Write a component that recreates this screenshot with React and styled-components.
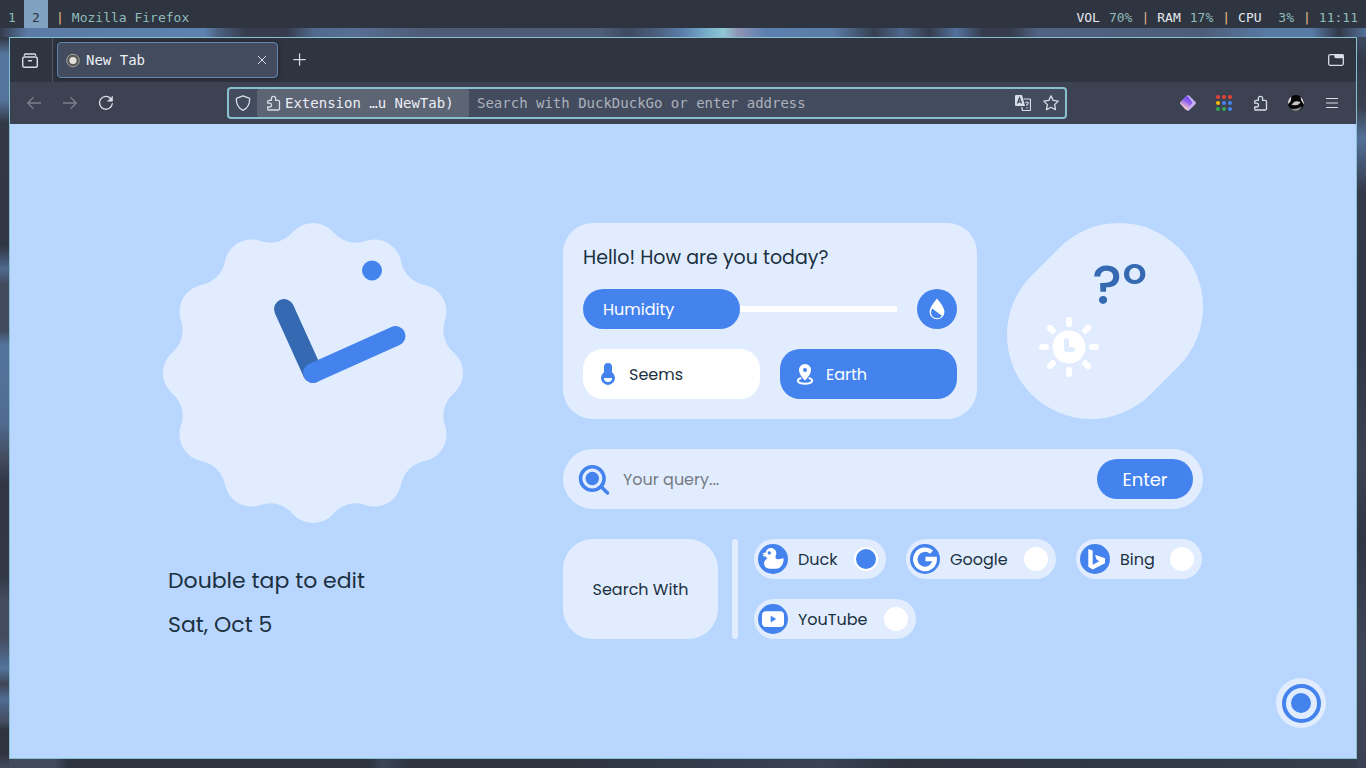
import React, { useState } from "react";
import styled, { createGlobalStyle, css } from "styled-components";

const color = {
  sky: "#b9d6ff",
  card: "#e1edff",
  blue: "#4483ed",
  deep: "#3569b2",
  ink: "#1c313f",
  panel: "#2e3440",
  toolbar: "#3c4252",
  field: "#434c5e",
  frost: "#88c0d0",
  snow: "#d8dee9",
};
const mono = `"DejaVu Sans Mono", monospace`;
const sans = `Poppins, Inter, "Open Sans", sans-serif`;

const GlobalStyle = createGlobalStyle`
  *, *::before, *::after { box-sizing: border-box; }
  body { margin: 0; background: ${color.panel}; }
  button, input { font: inherit; color: inherit; }
  button { border: 0; padding: 0; background: none; cursor: pointer; }
  p, h1 { margin: 0; font-weight: 400; }
  svg { display: block; flex: none; }
`;

const Desktop = styled.div`
  min-height: 100vh;
  display: flex;
  flex-direction: column;
  font-family: ${mono};
  background-color: #2f3542;
  background-repeat: no-repeat;
  background-image:
    linear-gradient(90deg, #343b4b 0, #5a7ba5 2%, #5d82af 15%, #4c6080 16%, #363c4d 18%, #363c4d 21%, #51698e 23%, #586f94 26%, #4e5b76 31%, #4d5c77 44%, #3f4a61 46%, #4a5d7c 48%, #5b7fac 50%, #7cb4cf 52%, #8fc7d4 53%, #8f95b4 54%, #5c80ae 56%, #5a7ca8 61%, #373f50 64%, #4e678c 66%, #353c4c 68%, #53719b 70%, #353b4b 72%, #353b4b 74%, #506384 76%, #4d5d79 88%, #587ba6 93%, #587ba6 96%, #323948 98%, #52709a 100%),
    linear-gradient(180deg, #333a49 0, #343b4a 5%, #55749d 7%, #55749d 13%, #323846 16%, #303644 32%, #50698e 35%, #424a5d 37%, #424a5d 43%, #54749e 45%, #506b91 55%, #42495b 60%, #303644 63%, #323846 75%, #444b5e 78%, #444b5e 83%, #54749e 87%, #3e4658 89%, #506b91 91%, #444d61 94%, #2d333f 95%, #2d333f 98%, #434a5d 100%),
    linear-gradient(180deg, #4b6285 0, #323948 8%, #3a4151 14%, #537199 18%, #343a49 25%, #303644 45%, #3b4353 60%, #303644 70%, #3e4659 85%, #3b4253 100%),
    linear-gradient(90deg, #434a5d 0, #434a5d 4%, #2d333f 5%, #2d333f 27%, #3b4558 28%, #2e3440 30%, #2e3440 42%, #3a4254 60%, #2e3440 66%, #363d4c 100%);
  background-size: 100% 37px, 9px 100%, 9px 100%, 100% 9px;
  background-position: 0 0, 0 0, 100% 0, 0 100%;
`;

const StatusBar = styled.header`
  height: 28px;
  padding-right: 8px;
  display: flex;
  justify-content: space-between;
  background: ${color.panel};
  font-size: 13px;
  line-height: 35px;
  color: #8fbcbb;
`;
const StatusGroup = styled.div`
  display: flex;
  gap: ${(p) => p.$gap || 0}px;
`;
const Workspace = styled.button`
  width: 24px;
  height: 28px;
  padding-top: 6px;
  line-height: 24px;
  ${(p) => p.$active && css`background: #81a1c1; color: ${color.panel};`}
`;
const Divider = styled.span`
  color: #e6ba88;
`;
const StatusLabel = styled.span`
  color: #e5e9f0;
`;
const WindowTitle = styled.span`
  padding-left: 8px;
  display: flex;
  gap: 8px;
`;

const Browser = styled.div`
  flex: 1;
  margin: 9px;
  display: flex;
  flex-direction: column;
  border: 1px solid ${color.frost};
  color: ${color.snow};
  font-size: 14px;
`;
const TabStrip = styled.div`
  height: 44px;
  display: flex;
  align-items: center;
  background: ${color.panel};
`;
const IconButton = styled.button`
  width: ${(p) => p.$width || 36}px;
  height: 36px;
  display: grid;
  place-items: center;
  opacity: ${(p) => (p.disabled ? 0.4 : 1)};
`;
const RecentSlot = styled.div`
  align-self: stretch;
  width: 43px;
  padding-right: 2px;
  display: grid;
  place-items: center;
  border-right: 1px solid #4f5665;
`;
const Tab = styled.div`
  width: 221px;
  height: 36px;
  margin: 0 4px;
  padding: 0 4px 0 8px;
  display: flex;
  align-items: center;
  gap: 5px;
  background: ${color.field};
  border: 1px solid #6286b3;
  border-radius: 4px;
  box-shadow: 0 0 4px rgba(0, 0, 0, 0.4);
  color: #eceff4;
`;
const TabTitle = styled.span`
  flex: 1;
`;
const TabStripEnd = styled.div`
  margin-left: auto;
  padding-right: 2px;
`;
const Toolbar = styled.div`
  height: 42px;
  padding: 0 6px;
  display: grid;
  grid-template-columns: auto 103fr 840fr 103fr auto;
  align-items: center;
  background: ${color.toolbar};
`;
const ToolGroup = styled.div`
  display: flex;
`;
const AddressBar = styled.div`
  grid-column: 3;
  height: 32px;
  display: flex;
  align-items: center;
  background: ${color.field};
  border: 2px solid ${color.frost};
  border-radius: 4px;
`;
const AddressButton = styled.button`
  width: 28px;
  height: 28px;
  display: grid;
  place-items: center;
`;
const SiteChip = styled.button`
  width: 212px;
  height: 28px;
  padding-left: 8px;
  display: flex;
  align-items: center;
  gap: 4px;
  background: #5d6474;
  border-radius: 3px;
  color: #eceff4;
  white-space: nowrap;
`;
const AddressInput = styled.input`
  flex: 1;
  min-width: 0;
  padding: 0 8px;
  border: 0;
  outline: 0;
  background: none;
  &::placeholder { color: #abb1bd; opacity: 1; }
`;

const Page = styled.main`
  flex: 1;
  position: relative;
  display: grid;
  place-items: center;
  background: ${color.sky};
  color: ${color.ink};
  font-family: ${sans};
  font-size: 16px;
`;
const Board = styled.div`
  display: grid;
  grid-template-columns: 300px 640px;
  gap: 100px;
`;
const Notes = styled.div`
  padding: 36px 5px 12px;
  font-size: 22px;
  line-height: 44px;
`;
const Widgets = styled.div`
  display: flex;
  flex-direction: column;
  gap: 30px;
`;
const TopRow = styled.div`
  display: grid;
  grid-template-columns: 1fr 196px;
  gap: 30px;
`;
const Greeting = styled.section`
  padding: 20px;
  display: grid;
  gap: 20px;
  background: ${color.card};
  border-radius: 30px;
`;
const Hello = styled.h1`
  font-size: 19px;
  line-height: 30px;
  height: 26px;
`;
const HumidityRow = styled.div`
  display: flex;
  align-items: center;
  gap: 20px;
`;
const Meter = styled.div`
  flex: 1;
  background: linear-gradient(#fff, #fff) center / 100% 6px no-repeat;
  border-radius: 20px 3px 3px 20px;
`;
const MeterFill = styled.div`
  height: 40px;
  padding-left: 20px;
  background: ${color.blue};
  border-radius: 20px;
  color: #fff;
  line-height: 41px;
`;
const RoundButton = styled.button`
  width: 40px;
  height: 40px;
  display: grid;
  place-items: center;
  background: ${color.blue};
  border-radius: 50%;
`;
const TileRow = styled.div`
  display: grid;
  grid-template-columns: 1fr 1fr;
  gap: 20px;
`;
const Tile = styled.div`
  height: 50px;
  padding-left: 15px;
  display: flex;
  align-items: center;
  gap: 11px;
  border-radius: 20px;
  background: ${(p) => (p.$filled ? color.blue : "#fff")};
  color: ${(p) => (p.$filled ? "#fff" : color.ink)};
`;
const Weather = styled.section`
  position: relative;
  height: 196px;
`;
const WeatherShape = styled.svg`
  position: absolute;
  inset: 0;
`;
const WeatherBody = styled.div`
  position: relative;
  padding: 34px 0 0 32px;
`;
const Temperature = styled.p`
  padding-left: 53px;
  height: 60px;
  font-size: 56px;
  font-weight: 500;
  line-height: 56px;
  color: ${color.deep};
`;
const SearchForm = styled.form`
  height: 60px;
  padding: 0 10px 0 15px;
  display: flex;
  align-items: center;
  gap: 13px;
  background: ${color.card};
  border-radius: 30px;
`;
const QueryInput = styled.input`
  flex: 1;
  min-width: 0;
  padding: 0;
  border: 0;
  outline: 0;
  background: none;
  &::placeholder { color: #757a85; opacity: 1; }
`;
const EnterButton = styled.button`
  width: 96px;
  height: 40px;
  background: ${color.blue};
  border-radius: 20px;
  color: #fff;
  font-size: 18px;
`;
const EngineRow = styled.div`
  display: grid;
  grid-template-columns: 155px 6px 1fr;
  column-gap: 14px;
  height: 100px;
`;
const SearchWith = styled.button`
  background: ${color.card};
  border-radius: 30px;
`;
const Rule = styled.div`
  background: ${color.card};
  border-radius: 3px;
`;
const Engines = styled.div`
  padding-left: 2px;
  display: flex;
  flex-wrap: wrap;
  gap: 20px;
`;
const Engine = styled.label`
  width: ${(p) => p.$width}px;
  height: 40px;
  padding: 0 8px 0 4px;
  display: flex;
  align-items: center;
  gap: 10px;
  background: ${color.card};
  border-radius: 20px;
`;
const EngineName = styled.span`
  flex: 1;
`;
const Radio = styled.input.attrs({ type: "radio" })`
  appearance: none;
  width: 24px;
  height: 24px;
  margin: 0;
  border: 2px solid #fff;
  border-radius: 50%;
  background: #fff;
  &:checked { background: ${color.blue}; }
`;
const SettingsButton = styled.button`
  position: absolute;
  right: 30px;
  bottom: 30px;
`;

/* Scalloped clock face: twelve lobes joined by concave fillets. */
function facePath() {
  const lobe = 27;
  const fillet = 29.6;
  const lobeDist = 123;
  const filletDist = 165.6;
  const at = (d, deg) => {
    const a = (deg * Math.PI) / 180;
    return [150 + d * Math.sin(a), 150 - d * Math.cos(a)];
  };
  const joint = (l, f) => {
    const a = at(lobeDist, l);
    const b = at(filletDist, f);
    const t = lobe / (lobe + fillet);
    return `${(a[0] + (b[0] - a[0]) * t).toFixed(2)} ${(a[1] + (b[1] - a[1]) * t).toFixed(2)}`;
  };
  let d = `M${joint(0, -15)}`;
  for (let i = 0; i < 12; i++) {
    const deg = i * 30;
    d += `A${lobe} ${lobe} 0 0 1 ${joint(deg, deg + 15)}`;
    d += `A${fillet} ${fillet} 0 0 0 ${joint(deg + 30, deg + 15)}`;
  }
  return `${d}Z`;
}

const Clock = () => (
  <svg width="300" height="300" viewBox="0 0 300 300" role="img" aria-label="Clock">
    <path d={facePath()} fill={color.card} />
    <g strokeWidth="20" strokeLinecap="round">
      <path d="M150 150 121 86" stroke={color.deep} />
      <path d="M150 150 232.5 113" stroke={color.blue} />
    </g>
    <circle cx="209" cy="47.5" r="10" fill={color.blue} />
  </svg>
);

const Stroke = ({ size = 16, w = 1.3, children }) => (
  <svg width={size} height={size} viewBox="0 0 16 16" fill="none" stroke={color.snow} strokeWidth={w} strokeLinecap="round" strokeLinejoin="round">
    {children}
  </svg>
);
const puzzle = "M3 15h10.2a1.3 1.3 0 0 0 1.3-1.3V6.6a1.3 1.3 0 0 0-1.3-1.3H10.6V3.4a2.1 2.1 0 0 0-4.2 0v1.9H4a1.3 1.3 0 0 0-1.3 1.3v1.6h1.9a1.9 1.9 0 0 1 0 3.8H2.7v1.7A1.3 1.3 0 0 0 4 15";

const dots = ["#ea4335", "#ea4335", "#ea4335", "#fbbc04", "#4285f4", "#4285f4", "#34a853", "#34a853", "#4285f4"];

const Badge = ({ children }) => (
  <svg width="30" height="30" viewBox="0 0 30 30">
    <circle cx="15" cy="15" r="15" fill={color.blue} />
    {children}
  </svg>
);

const engines = [
  {
    name: "Duck", width: 132,
    icon: (
      <Badge>
        <path fill="#fff" d="M4 9.300 7.600 8.500C8.200 5.700 10.200 3.900 12.900 3.900c3.100 0 5.400 2.300 5.400 5.200 0 1.700-.8 2.600-.8 3.800 0 1.600 1.400 2.500 3 2.300 1.900-.2 3.500-.8 4.700-1.300.6 1 .5 2.200.2 3.300-.9 4.300-3 7.500-7.700 7.500h-6C8.500 24.700 6.100 22.500 6.100 19.600c0-2.300 1.300-4 3.200-5.100-.8-.5-1.200-1.200-1.500-2-1.300.2-2.500-.1-3.200-1.200l1.700-1z" />
        <circle cx="11.300" cy="8.900" r="1.700" fill={color.blue} />
      </Badge>
    ),
  },
  {
    name: "Google", width: 150,
    icon: (
      <Badge>
        <path d="M21.600 8.200A9.700 9.700 0 1 0 24.700 15H15.500" fill="none" stroke="#fff" strokeWidth="4.400" />
      </Badge>
    ),
  },
  {
    name: "Bing", width: 126,
    icon: (
      <Badge>
        <path fill="#fff" d="M8.300 5 12.700 6.600V20.700L19.300 17.300 16.700 15.800 15 10.700 25 14.300V19.300L12.700 25.500 8.300 22.700z" />
      </Badge>
    ),
  },
  {
    name: "YouTube", width: 162,
    icon: (
      <Badge>
        <rect x="4" y="7.300" width="22" height="15.700" rx="4" fill="#fff" />
        <path d="M12.700 11.800v6.600l5.600-3.300z" fill={color.blue} />
      </Badge>
    ),
  },
];

const stats = [["VOL", "70%"], ["RAM", "17%"], ["CPU", "\u00a03%"]];

export default function App() {
  const [engine, setEngine] = useState("Duck");
  return (
    <>
      <GlobalStyle />
      <Desktop>
        <StatusBar>
          <StatusGroup>
            <Workspace>1</Workspace>
            <Workspace $active>2</Workspace>
            <WindowTitle><Divider>|</Divider>Mozilla Firefox</WindowTitle>
          </StatusGroup>
          <StatusGroup $gap={8}>
            {stats.map(([label, value]) => (
              <StatusGroup key={label} $gap={9}>
                <StatusLabel>{label}</StatusLabel>
                <span>{value}</span>
                <Divider>|</Divider>
              </StatusGroup>
            ))}
            <span>11:11</span>
          </StatusGroup>
        </StatusBar>

        <Browser>
          <TabStrip>
            <RecentSlot>
              <IconButton aria-label="Recent browsing">
                <Stroke w="1.400">
                  <rect x=".7" y="5" width="14.600" height="10.300" rx="1.800" />
                  <path d="M2.300 3.200c0-.8.500-1.200 1.200-1.200h9c.7 0 1.200.4 1.200 1.200M6.500 8.800h3" />
                </Stroke>
              </IconButton>
            </RecentSlot>
            <Tab>
              <svg width="15" height="15" viewBox="0 0 15 15">
                <circle cx="7" cy="7.500" r="6.300" fill="#585858" stroke="#a4a29e" />
                <circle cx="7" cy="7.500" r="3.600" fill="#e4e1da" />
              </svg>
              <TabTitle>New Tab</TabTitle>
              <IconButton $width={22} aria-label="Close tab">
                <Stroke size={10} w="1.600"><path d="M2 2l12 12M14 2 2 14" /></Stroke>
              </IconButton>
            </Tab>
            <IconButton aria-label="Open a new tab">
              <Stroke size={14} w="1.400"><path d="M7.500 1v13M1 7.500h13" /></Stroke>
            </IconButton>
            <TabStripEnd>
              <IconButton aria-label="Picture in picture">
                <Stroke>
                  <rect x=".7" y="2.700" width="14.600" height="10.600" rx="1.500" />
                  <path d="M7 3h8v2.600h-7q-1 0-1-1z" fill={color.snow} />
                </Stroke>
              </IconButton>
            </TabStripEnd>
          </TabStrip>

          <Toolbar>
            <ToolGroup>
              <IconButton disabled aria-label="Back">
                <Stroke><path d="M14.500 8H2M7 2.700 1.700 8 7 13.300" /></Stroke>
              </IconButton>
              <IconButton disabled aria-label="Forward">
                <Stroke><path d="M1.500 8H14M9 2.700 14.300 8 9 13.300" /></Stroke>
              </IconButton>
              <IconButton aria-label="Reload">
                <Stroke>
                  <path d="M14.300 8.600A6.400 6.400 0 1 1 12.700 3.500" />
                  <path d="M14.500 1.500v4.700H9.800z" fill={color.snow} strokeWidth=".6" />
                </Stroke>
              </IconButton>
            </ToolGroup>
            <AddressBar>
              <AddressButton aria-label="Tracking protection">
                <Stroke><path d="M8 .8 14.600 3.300c.3 4.600-.9 9.200-6.600 12C2.300 12.500 1.100 7.900 1.400 3.300z" /></Stroke>
              </AddressButton>
              <SiteChip>
                <Stroke><path d={puzzle} /></Stroke>
                Extension …u NewTab)
              </SiteChip>
              <AddressInput aria-label="Address" placeholder="Search with DuckDuckGo or enter address" />
              <AddressButton aria-label="Translate page">
                <svg width="16" height="16" viewBox="0 0 16 16">
                  <path d="M1 0h6l3 11H1a1 1 0 0 1-1-1V1a1 1 0 0 1 1-1z" fill={color.snow} />
                  <path d="M2.500 8.500 4.500 3l2 5.500M3.200 6.800h2.600" fill="none" stroke={color.field} strokeWidth="1.300" />
                  <path d="M8.500 4H14.500a1 1 0 0 1 1 1v9.500a1 1 0 0 1-1 1H7.500L6.700 12" fill="none" stroke={color.snow} strokeWidth="1.200" />
                  <path d="M10.500 8.200q.2-1.200 1.400-1.200 1.300 0 1.300 1.200 0 .8-1.200 1.300v1.200M12 12.200v1.300" fill="none" stroke={color.snow} strokeWidth="1.200" />
                </svg>
              </AddressButton>
              <AddressButton aria-label="Bookmark this page">
                <Stroke><path d="M8 .9 10.200 5.400 15.200 6.100 11.600 9.600 12.500 14.700 8 12.300 3.500 14.700 4.400 9.600.8 6.100 5.800 5.400z" /></Stroke>
              </AddressButton>
            </AddressBar>
            <div />
            <ToolGroup>
              <IconButton aria-label="Colour extension">
                <svg width="16" height="16" viewBox="0 0 16 16">
                  <defs>
                    <linearGradient id="gem" x1=".7" y1="0" x2=".2" y2="1">
                      <stop offset="0" stopColor="#6a3df5" />
                      <stop offset=".4" stopColor="#9468ee" />
                      <stop offset=".9" stopColor="#ffd9c4" />
                    </linearGradient>
                  </defs>
                  <path d="M7 .6q1-.9 2 0L15.500 7q.9 1 0 2L9 15.400q-1 .9-2 0L.5 9q-.9-1 0-2z" fill="#c9b0f5" />
                  <path d="M6 1.600q1-.9 2 0L12 7q.6 1-.4 2L7.500 14.400q-1 .9-2 0L.5 9q-.9-1 0-2z" fill="url(#gem)" />
                </svg>
              </IconButton>
              <IconButton aria-label="Apps">
                <svg width="16" height="16" viewBox="0 0 16 16">
                  {dots.map((fill, i) => (
                    <circle key={i} cx={2 + (i % 3) * 6} cy={2 + Math.floor(i / 3) * 6} r="2" fill={fill} />
                  ))}
                </svg>
              </IconButton>
              <IconButton aria-label="Extensions"><Stroke><path d={puzzle} /></Stroke></IconButton>
              <IconButton aria-label="Account">
                <svg width="16" height="16" viewBox="0 0 16 16">
                  <circle cx="8" cy="8" r="8" fill="#060606" />
                  <path d="M3.500 1.400Q-.3 4 .1 9L2.500 6.500zM12.500 1.500Q16.300 4.500 16 9.500L13.300 5.500z" fill="#e6e6e6" />
                  <path d="M3.500 10Q5.500 6 9 6.200L12.500 7Q11.500 10 7.500 10.200z" fill="#c4c4c4" />
                  <path d="M2.500 13.500Q8 15 14 11.500 11.500 16 8 16 4.500 16 2.500 13.500z" fill="#8a8a8a" />
                </svg>
              </IconButton>
              <IconButton aria-label="Menu">
                <Stroke w="1.200"><path d="M2.500 3.500h11M2.500 8h11M2.500 12.500h11" /></Stroke>
              </IconButton>
            </ToolGroup>
          </Toolbar>

          <Page>
            <Board>
              <div>
                <Clock />
                <Notes>
                  <p>Double tap to edit</p>
                  <p>Sat, Oct 5</p>
                </Notes>
              </div>
              <Widgets>
                <TopRow>
                  <Greeting>
                    <Hello>Hello! How are you today?</Hello>
                    <HumidityRow>
                      <Meter role="progressbar" aria-label="Humidity" aria-valuenow={50}>
                        <MeterFill style={{ width: "50%" }}>Humidity</MeterFill>
                      </Meter>
                      <RoundButton aria-label="Humidity details">
                        <svg width="16" height="22" viewBox="0 0 16 22">
                          <path d="M8 .5Q.5 9.500.5 13.700a7.500 7.500 0 0 0 15 0Q15.500 9.500 8 .5z" fill="#fff" />
                          <path d="M3.200 10.500 12.900 17.800A6 6 0 0 1 2.100 13.700q0-1.500 1.100-3.200z" fill={color.blue} />
                        </svg>
                      </RoundButton>
                    </HumidityRow>
                    <TileRow>
                      <Tile>
                        <svg width="20" height="24" viewBox="0 0 20 24">
                          <path d="M6 5a4 4 0 0 1 8 0v5.200a7 7 0 1 1-8 0z" fill={color.blue} />
                          <path d="M6 16h8a4 4 0 0 1-8 0z" fill="#fff" />
                        </svg>
                        Seems
                      </Tile>
                      <Tile $filled>
                        <svg width="20" height="24" viewBox="0 0 20 24">
                          <path d="M10 2a6 6 0 0 1 6 6.200c0 4.300-6 10.300-6 10.300S4 12.500 4 8.200A6 6 0 0 1 10 2z" fill="#fff" />
                          <circle cx="10" cy="8" r="2" fill={color.blue} />
                          <path d="M5.500 16.300c-4.500 1.300-3.500 5.400 4.500 5.400s9-4.100 4.500-5.400" fill="none" stroke="#fff" strokeWidth="2" strokeLinecap="round" />
                        </svg>
                        Earth
                      </Tile>
                    </TileRow>
                  </Greeting>
                  <Weather>
                    <WeatherShape width="196" height="196" viewBox="0 0 196 196">
                      <path d="M84 112 112 84" stroke={color.card} strokeWidth="168" strokeLinecap="round" />
                    </WeatherShape>
                    <WeatherBody>
                      <Temperature>?º</Temperature>
                      <svg width="60" height="60" viewBox="0 0 60 60">
                        <circle cx="30" cy="30" r="16.500" fill="#fff" />
                        <g stroke="#fff" strokeWidth="6" strokeLinecap="round">
                          {[0, 45, 90, 135, 180, 225, 270, 315].map((a) => (
                            <path key={a} d="M30 3v4" transform={`rotate(${a} 30 30)`} />
                          ))}
                        </g>
                        <path d="M27.500 23.500v9h6" fill="none" stroke={color.card} strokeWidth="5" strokeLinecap="round" strokeLinejoin="round" />
                      </svg>
                    </WeatherBody>
                  </Weather>
                </TopRow>

                <SearchForm onSubmit={(e) => e.preventDefault()}>
                  <svg width="32" height="32" viewBox="0 0 32 32">
                    <path d="M23 23.500l6.500 6.500" stroke={color.blue} strokeWidth="3.500" strokeLinecap="round" />
                    <circle cx="14.300" cy="15.500" r="11.800" fill="none" stroke={color.blue} strokeWidth="3.500" />
                    <circle cx="14.300" cy="15.500" r="6.700" fill={color.blue} />
                  </svg>
                  <QueryInput aria-label="Search query" placeholder="Your query..." />
                  <EnterButton type="submit">Enter</EnterButton>
                </SearchForm>

                <EngineRow>
                  <SearchWith>Search With</SearchWith>
                  <Rule />
                  <Engines>
                    {engines.map(({ name, width, icon }) => (
                      <Engine key={name} $width={width}>
                        {icon}
                        <EngineName>{name}</EngineName>
                        <Radio name="engine" checked={engine === name} onChange={() => setEngine(name)} />
                      </Engine>
                    ))}
                  </Engines>
                </EngineRow>
              </Widgets>
            </Board>
            <SettingsButton aria-label="Settings">
              <svg width="50" height="50" viewBox="0 0 50 50">
                <circle cx="25" cy="25" r="25" fill={color.card} />
                <circle cx="25.500" cy="25.500" r="17.500" fill="none" stroke={color.blue} strokeWidth="4" />
                <circle cx="25" cy="25" r="10" fill={color.blue} />
              </svg>
            </SettingsButton>
          </Page>
        </Browser>
      </Desktop>
    </>
  );
}
